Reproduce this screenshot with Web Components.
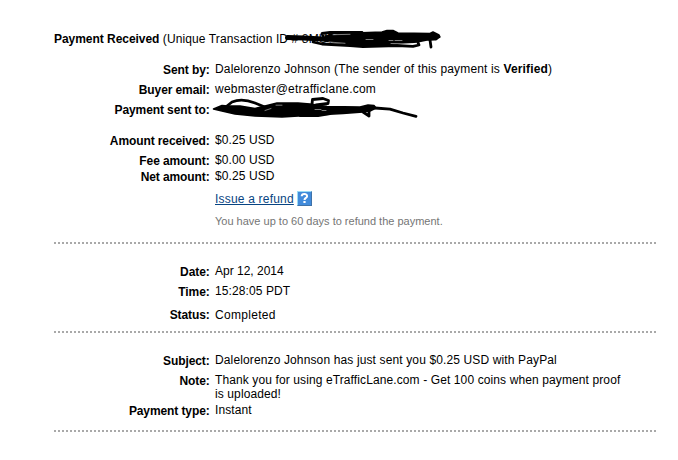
<!DOCTYPE html>
<html lang="en">
<head>
<meta charset="utf-8">
<title>Payment Received</title>
<style>
    body {
        margin: 0;
        background: #fff;
        color: #000;
        font: 12px/14px "Liberation Sans", Arial, sans-serif;
    }
</style>
</head>
<body>
<payment-details></payment-details>

<script>
class DetailRow extends HTMLElement {
    constructor() {
        super();
        const shadow = this.attachShadow({ mode: 'open' });

        shadow.innerHTML = `
            <style>
                :host {
                    display: grid;
                    grid-template-columns: 156px 410px;
                    column-gap: 5px;
                    margin-top: var(--gap, 6px);
                }

                .label {
                    padding: var(--label-drop, 1px) 0.4px 0 0;
                    height: 14px;
                    box-sizing: border-box;
                    text-align: right;
                    font-weight: bold;
                    white-space: nowrap;
                    letter-spacing: -0.1px;
                }

                .value {
                    position: relative;
                    min-height: 14px;
                    letter-spacing: var(--value-spacing, 0.1px);
                }
            </style>
            <div class="label"></div>
            <div class="value"><slot></slot></div>
        `;
    }

    connectedCallback() {
        this.shadowRoot.querySelector('.label').textContent = this.getAttribute('label') || '';
    }
}

class DottedRule extends HTMLElement {
    constructor() {
        super();
        const shadow = this.attachShadow({ mode: 'open' });

        shadow.innerHTML = `
            <style>
                :host {
                    display: block;
                    height: 2px;
                    width: 602px;
                    margin-top: var(--gap, 12px);
                    background: repeating-linear-gradient(to right, #a9a9a9 0 2px, #fff 2px 4px);
                }
            </style>
        `;
    }
}

class HelpBadge extends HTMLElement {
    constructor() {
        super();
        const shadow = this.attachShadow({ mode: 'open' });

        shadow.innerHTML = `
            <style>
                :host {
                    display: block;
                    width: 15px;
                    height: 15px;
                }

                svg {
                    display: block;
                }
            </style>
            <svg width="15" height="15" viewBox="0 0 15 15">
                <rect width="15" height="15" fill="#3f72a8"/>
                <path d="M0 0H15L14 1H1V14L0 15Z" fill="#9bdcf5"/>
                <rect x="1" y="1" width="13" height="13" fill="#428bdb"/>
                <path d="M4.7 5.3C4.7 2.3 10.1 2.2 10.1 5.2C10.1 7 7.5 6.8 7.5 9" fill="none" stroke="#fff" stroke-width="2"/>
                <rect x="6.4" y="10" width="2.2" height="2" fill="#fff"/>
            </svg>
        `;
    }
}

/* Marker strokes that hide the transaction ID and the recipient */
class MarkerScribble extends HTMLElement {
    constructor() {
        super();
        const shadow = this.attachShadow({ mode: 'open' });

        shadow.innerHTML = `
            <style>
                :host {
                    position: absolute;
                    left: var(--x, 0);
                    top: var(--y, 0);
                    pointer-events: none;
                }

                svg {
                    display: block;
                    fill: none;
                    stroke: #000;
                    stroke-width: 2.8;
                    stroke-linecap: round;
                    stroke-linejoin: round;
                }

                .solid {
                    fill: #000;
                    stroke-width: 1.5;
                }

                .gap {
                    stroke: #fff;
                    stroke-width: 0.7;
                    stroke-opacity: 0.7;
                }
            </style>
            <svg></svg>
        `;
    }

    connectedCallback() {
        const svg = this.shadowRoot.querySelector('svg');
        if (this.getAttribute('kind') === 'transaction') {
            svg.setAttribute('width', 165);
            svg.setAttribute('height', 26);
            svg.setAttribute('viewBox', '280 26 165 26');
            svg.innerHTML = `
                <path d="M287.5 37.5L304 38L322 39L360 41" stroke-width="5"/>
                <path d="M323 36L322 33.5L330 32.5L362 32.5"/>
                <path class="solid" d="M325 36L355 33L382 32L387 30.5L393 30.5L398 33L430 33.5L433 32L439 35L440 37L437 39L427 40L417 42L393 44L383 46L360 45L340 43L325 41Z"/>
                <path d="M313 42L322 44L350 45.5L363 46.5L397 45.5L413 46.3L419 45L418 42.5"/>
                <path d="M430 40L431 47M428 39L436 39"/>
                <path class="gap" d="M333 34.7L350 34.3M329 42L345 43.3M366 39.5H373M389 40.5H393M395 40.5H402M391 43.5L412 43.8"/>
            `;
        } else {
            svg.setAttribute('width', 212);
            svg.setAttribute('height', 28);
            svg.setAttribute('viewBox', '208 94 212 28');
            svg.innerHTML = `
                <path class="solid" d="M213.5 109L222 105.5L228 106L240 106L255 108.5L265 106L277 103L298 103L310 104L327 106.5L360 107L368 105L374 105.5L376 108L370 111L363 112L343 113.5L315 115L282 117L255 116L235 114L222 111Z"/>
                <path d="M227 106L232 102Q242 98 255 103L266 107.5"/>
                <path d="M312 104L312.5 99.5L323 98.5L328.5 100.5L328 103.5L316 105"/>
                <path d="M300 115.5L318 115.5L330 113.5M363 112L369 116L369 111"/>
                <path d="M375 108L390 109.2L403 113L416 116.3"/>
                <path class="gap" d="M276 105.2H282M265 110.5L271 108.5M315 109.5H321M322 110.5H326"/>
            `;
        }
    }
}

class PaymentDetails extends HTMLElement {
    constructor() {
        super();
        const shadow = this.attachShadow({ mode: 'open' });

        shadow.innerHTML = `
            <style>
                :host {
                    display: block;
                    width: 602px;
                    padding: 32px 0 0 54px;
                }

                .title {
                    position: relative;
                    white-space: nowrap;
                }

                .title b {
                    letter-spacing: -0.04px;
                }

                .tx {
                    letter-spacing: 0.12px;
                }

                .refund {
                    display: flex;
                    align-items: flex-start;
                    gap: 3px;
                }

                a {
                    color: #084482;
                    text-decoration: underline;
                }

                help-badge {
                    margin-top: -1px;
                }

                .hint {
                    font-size: 11px;
                    color: #757575;
                }
            </style>
            <div class="title"><b>Payment Received</b> <span class="tx">(Unique Transaction ID # 8MU7</span>
                <marker-scribble kind="transaction" style="--x: 226px; --y: -6px"></marker-scribble>
            </div>

            <detail-row label="Sent by:" style="--gap: 16px; --value-spacing: 0.15px">Dalelorenzo Johnson (The sender of this payment is <b>Verified</b>)</detail-row>
            <detail-row label="Buyer email:" style="--value-spacing: 0.22px">webmaster@etrafficlane.com</detail-row>
            <detail-row label="Payment sent to:">
                <marker-scribble kind="recipient" style="--x: -7px; --y: -8px"></marker-scribble>
            </detail-row>

            <detail-row label="Amount received:" style="--gap: 17px">$0.25 USD</detail-row>
            <detail-row label="Fee amount:">$0.00 USD</detail-row>
            <detail-row label="Net amount:" style="--gap: 2px">$0.25 USD</detail-row>
            <detail-row style="--gap: 9px; --value-spacing: 0.2px"><div class="refund"><a>Issue a refund</a><help-badge></help-badge></div></detail-row>
            <detail-row style="--gap: 8px; --value-spacing: 0"><span class="hint">You have up to 60 days to refund the payment.</span></detail-row>
            <dotted-rule style="--gap: 14px"></dotted-rule>

            <detail-row label="Date:" style="--gap: 20px; --value-spacing: 0">Apr 12, 2014</detail-row>
            <detail-row label="Time:">15:28:05 PDT</detail-row>
            <detail-row label="Status:" style="--gap: 10px; --label-drop: 0; --value-spacing: 0.3px">Completed</detail-row>
            <dotted-rule style="--gap: 9px"></dotted-rule>

            <detail-row label="Subject:" style="--gap: 20px; --value-spacing: 0.13px">Dalelorenzo Johnson has just sent you $0.25 USD with PayPal</detail-row>
            <detail-row label="Note:" style="--value-spacing: 0.11px">Thank you for using eTrafficLane.com - Get 100 coins when payment proof is uploaded!</detail-row>
            <detail-row label="Payment type:" style="--gap: 2px">Instant</detail-row>
            <dotted-rule style="--gap: 13px"></dotted-rule>
        `;
    }
}

customElements.define('detail-row', DetailRow);
customElements.define('dotted-rule', DottedRule);
customElements.define('help-badge', HelpBadge);
customElements.define('marker-scribble', MarkerScribble);
customElements.define('payment-details', PaymentDetails);
</script>
</body>
</html>
